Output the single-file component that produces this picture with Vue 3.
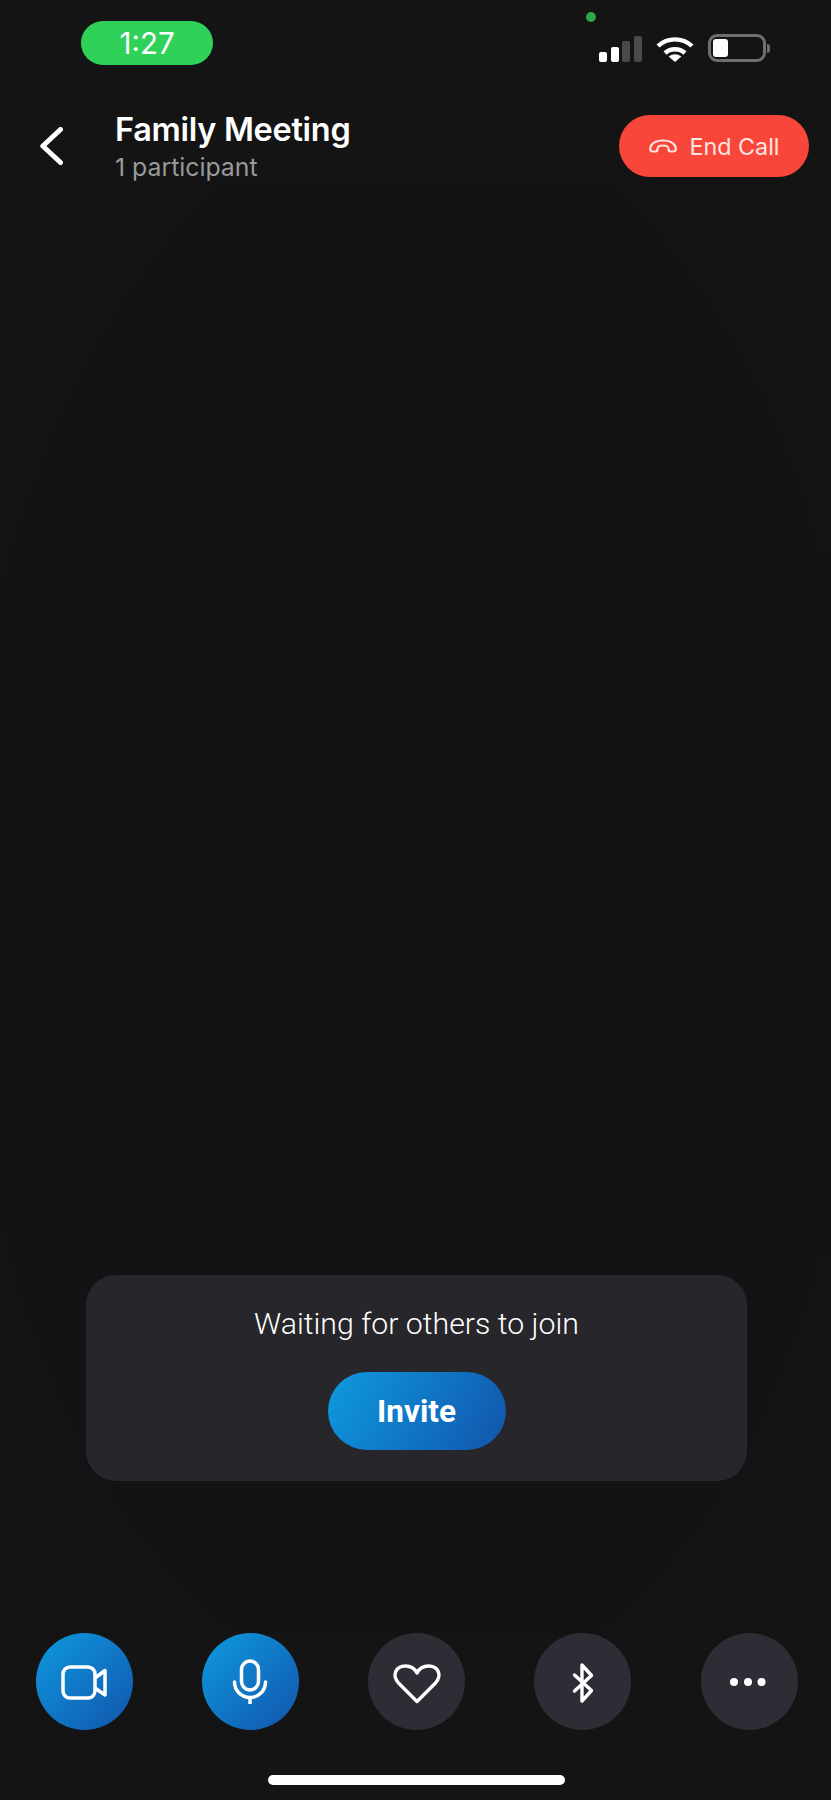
<template>
  <div class="screen">
    <!-- status bar -->
    <div class="status-bar">
      <div class="time-pill">1:27</div>
      <span class="camera-dot"></span>
      <div class="status-icons">
        <div class="signal">
          <span class="bar on b1"></span>
          <span class="bar on b2"></span>
          <span class="bar b3"></span>
          <span class="bar b4"></span>
        </div>
        <svg class="wifi" width="38" height="27" viewBox="0 0 38 27" fill="none" stroke="#fff" stroke-width="4.4">
          <path d="M2 11 A25 25 0 0 1 36 11" />
          <path d="M9 18 A15 15 0 0 1 29 18" />
          <path d="M12.6 21.6 Q19 17 25.4 21.6 L19 27 Z" fill="#fff" stroke="none" />
        </svg>
        <div class="battery">
          <div class="battery-shell"><span class="battery-level"></span></div>
          <span class="battery-nub"></span>
        </div>
      </div>
    </div>

    <!-- header -->
    <header class="header">
      <svg class="back" width="23" height="38" viewBox="0 0 23 38" fill="none" stroke="#fff" stroke-width="5" stroke-linecap="round" stroke-linejoin="round">
        <path d="M20.5 2.5 L2.8 19 L20.5 35.5" />
      </svg>
      <div class="titles">
        <div class="title">Family Meeting</div>
        <div class="subtitle">1 participant</div>
      </div>
      <button class="end-call">
        <svg width="28" height="14" viewBox="0 0 28 14" fill="none" stroke="#fde5e2" stroke-width="2.2" stroke-linejoin="round">
          <path d="M3.5 12.5 C1.5 12.5 0.8 10.5 1.5 8 C3 4 8 1.5 14 1.5 C20 1.5 25 4 26.5 8 C27.2 10.5 26.5 12.5 24.5 12.5 L21.5 12.5 C20 12.5 19.5 11.5 19.5 10 C19.5 8 18 6.5 14 6.5 C10 6.5 8.5 8 8.5 10 C8.5 11.5 8 12.5 6.5 12.5 Z" />
        </svg>
        <span>End Call</span>
      </button>
    </header>

    <!-- waiting card -->
    <main class="stage">
      <section class="waiting-card">
        <p class="waiting-text">Waiting for others to join</p>
        <button class="invite">Invite</button>
      </section>
    </main>

    <!-- call controls -->
    <nav class="controls">
      <button class="control active">
        <svg width="60" height="60" viewBox="0 0 60 60" fill="none" stroke="#fff" stroke-width="3.5" stroke-linejoin="round">
          <rect x="9" y="15" width="32" height="31" rx="7" />
          <path d="M41 26 L51 18.5 V43 L41 36" />
        </svg>
      </button>
      <button class="control active">
        <svg width="60" height="60" viewBox="0 0 60 60" fill="none" stroke="#fff" stroke-width="3.5" stroke-linecap="round">
          <rect x="21.5" y="9" width="17" height="29" rx="8.5" />
          <path d="M14.5 30 A15.5 15.5 0 0 0 45.5 30" />
          <path d="M30 46 V52" stroke-linecap="butt" />
        </svg>
      </button>
      <button class="control">
        <svg width="60" height="60" viewBox="0 0 60 60" fill="none" stroke="#fff" stroke-width="3.4" stroke-linejoin="round">
          <path d="M30 49.5 L11.5 31 C4.5 23 9 14 18.5 14 C23.5 14 28 17 30 21 C32 17 36.5 14 41.5 14 C51 14 55.5 23 48.5 31 Z" />
        </svg>
      </button>
      <button class="control">
        <svg width="60" height="60" viewBox="0 0 60 60" fill="none" stroke="#fff" stroke-width="3.4" stroke-linecap="round" stroke-linejoin="round">
          <path d="M21.5 23 L38.5 38.5 L29 49 V13 L38.5 23.5 L21.5 39" />
        </svg>
      </button>
      <button class="control">
        <svg width="60" height="60" viewBox="0 0 60 60" fill="#fff">
          <circle cx="15" cy="30" r="4" />
          <circle cx="29" cy="30" r="4" />
          <circle cx="42.5" cy="30" r="4" />
        </svg>
      </button>
    </nav>

    <div class="home-indicator"></div>
  </div>
</template>

<script setup>
</script>

<style>
html,
body {
  margin: 0;
  background: #141414;
}
</style>

<style scoped>
.screen {
  position: relative;
  width: 831px;
  height: 1800px;
  display: flex;
  flex-direction: column;
  background: #141414;
  font-family: Inter, "Liberation Sans", sans-serif;
  color: #fff;
  overflow: hidden;
}

button {
  border: none;
  padding: 0;
  font: inherit;
  color: inherit;
}

/* status bar */
.status-bar {
  display: flex;
  justify-content: space-between;
  height: 65px;
  padding: 21px 61px 0 81px;
  box-sizing: border-box;
}

.time-pill {
  width: 132px;
  height: 44px;
  border-radius: 22px;
  background: #30d158;
  display: flex;
  align-items: center;
  justify-content: center;
  font-size: 29.5px;
  font-weight: 400;
}

.camera-dot {
  position: absolute;
  left: 586px;
  top: 12px;
  width: 10px;
  height: 10px;
  border-radius: 50%;
  background: #2aa84a;
}

.status-icons {
  display: flex;
  align-items: flex-end;
  height: 41px;
}

.signal {
  display: flex;
  align-items: flex-end;
  gap: 3.6px;
  height: 26px;
  margin-right: 14px;
}

.bar {
  width: 8px;
  border-radius: 2px;
  background: #4a4a4a;
}

.bar.on {
  background: #fff;
}

.b1 { height: 10px; }
.b2 { height: 15px; }
.b3 { height: 21px; }
.b4 { height: 26px; }

.wifi {
  display: block;
  margin-right: 14px;
}

.battery {
  display: flex;
  align-items: center;
}

.battery-shell {
  width: 58px;
  height: 28px;
  box-sizing: border-box;
  border: 3px solid #6f6f6f;
  border-radius: 9px;
  padding: 2px;
}

.battery-level {
  display: block;
  width: 15px;
  height: 100%;
  border-radius: 3px;
  background: #fff;
}

.battery-nub {
  width: 3px;
  height: 9px;
  margin-left: 1px;
  border-radius: 0 3px 3px 0;
  background: #6f6f6f;
}

/* header */
.header {
  position: relative;
  z-index: 1;
  display: flex;
  align-items: center;
  height: 62px;
  margin-top: 50px;
  padding: 0 22px 0 40px;
}

.back {
  display: block;
  flex: none;
  margin: 0 52px 0 0;
}

.titles {
  flex: 1;
  padding-top: 2px;
}

.title {
  font-size: 32.5px;
  line-height: 38px;
  font-weight: 600;
  letter-spacing: -0.3px;
  margin-top: -2px;
}

.subtitle {
  margin-top: 4px;
  font-size: 24.8px;
  line-height: 29px;
  color: #999;
}

.end-call {
  width: 190px;
  height: 62px;
  border-radius: 31px;
  background: #f9463a;
  color: #fde5e2;
  display: flex;
  align-items: center;
  justify-content: center;
  gap: 13px;
  font-size: 23.3px;
}

.end-call svg {
  display: block;
}

/* waiting card */
.stage {
  flex: 1;
  display: flex;
  flex-direction: column;
  justify-content: flex-end;
  align-items: center;
  padding: 0 0 152px 2px;
  background: radial-gradient(ellipse at center, #131215 75%, #141414 100%);
}

.waiting-card {
  width: 661px;
  height: 206px;
  box-sizing: border-box;
  border-radius: 30px;
  background: #26262b;
  padding-top: 30px;
  display: flex;
  flex-direction: column;
  align-items: center;
}

.waiting-text {
  margin: 0;
  font-family: Roboto, "Liberation Sans", sans-serif;
  font-size: 30.3px;
  line-height: 38px;
  font-weight: 300;
}

.invite {
  width: 178px;
  height: 78px;
  margin-top: 29px;
  border-radius: 39px;
  background: linear-gradient(120deg, #0e9ae0, #1254ab);
  font-family: Roboto, "Liberation Sans", sans-serif;
  font-size: 31.5px;
  font-weight: 700;
  color: #fff;
}

/* call controls */
.controls {
  display: flex;
  justify-content: space-between;
  padding: 0 33.5px 0 35.5px;
}

.control {
  width: 97px;
  height: 97px;
  border-radius: 50%;
  background: #2d2e35;
  display: flex;
  align-items: center;
  justify-content: center;
}

.control svg {
  display: block;
}

.control.active {
  background: linear-gradient(135deg, #0e9ae0, #1254ab);
}

.home-indicator {
  width: 297px;
  height: 10px;
  margin: 45px 0 15px 268px;
  border-radius: 5px;
  background: #fff;
}
</style>
